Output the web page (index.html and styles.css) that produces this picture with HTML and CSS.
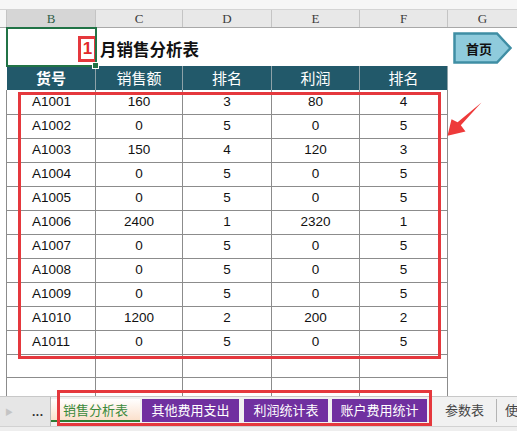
FILE: index.html
```html
<!DOCTYPE html>
<html lang="zh-CN">
<head>
<meta charset="utf-8">
<link rel="stylesheet" href="styles.css">
</head>
<body>
<div class="app">
  <div class="topstrip"></div>
  <div class="colhdr">
    <div class="ch corner"></div>
    <div class="ch sel">B</div>
    <div class="ch">C</div>
    <div class="ch">D</div>
    <div class="ch">E</div>
    <div class="ch">F</div>
    <div class="ch last">G</div>
  </div>
  <div class="sheet">
    <div class="row title-row">
      <div class="sp0"></div>
      <div class="title"><span class="month">1</span><span>月销售分析表</span></div>
      <div></div>
    </div>
    <div class="row hrow">
      <div class="sp0"></div>
      <div class="h bold">货号</div>
      <div class="h">销售额</div>
      <div class="h">排名</div>
      <div class="h">利润</div>
      <div class="h">排名</div>
      <div></div>
    </div>
    <div class="row drow"><div class="sp"></div><div class="c id">A1001</div><div class="c">160</div><div class="c">3</div><div class="c">80</div><div class="c">4</div><div></div></div>
    <div class="row drow"><div class="sp"></div><div class="c id">A1002</div><div class="c">0</div><div class="c">5</div><div class="c">0</div><div class="c">5</div><div></div></div>
    <div class="row drow"><div class="sp"></div><div class="c id">A1003</div><div class="c">150</div><div class="c">4</div><div class="c">120</div><div class="c">3</div><div></div></div>
    <div class="row drow"><div class="sp"></div><div class="c id">A1004</div><div class="c">0</div><div class="c">5</div><div class="c">0</div><div class="c">5</div><div></div></div>
    <div class="row drow"><div class="sp"></div><div class="c id">A1005</div><div class="c">0</div><div class="c">5</div><div class="c">0</div><div class="c">5</div><div></div></div>
    <div class="row drow"><div class="sp"></div><div class="c id">A1006</div><div class="c">2400</div><div class="c">1</div><div class="c">2320</div><div class="c">1</div><div></div></div>
    <div class="row drow"><div class="sp"></div><div class="c id">A1007</div><div class="c">0</div><div class="c">5</div><div class="c">0</div><div class="c">5</div><div></div></div>
    <div class="row drow"><div class="sp"></div><div class="c id">A1008</div><div class="c">0</div><div class="c">5</div><div class="c">0</div><div class="c">5</div><div></div></div>
    <div class="row drow"><div class="sp"></div><div class="c id">A1009</div><div class="c">0</div><div class="c">5</div><div class="c">0</div><div class="c">5</div><div></div></div>
    <div class="row drow"><div class="sp"></div><div class="c id">A1010</div><div class="c">1200</div><div class="c">2</div><div class="c">200</div><div class="c">2</div><div></div></div>
    <div class="row drow"><div class="sp"></div><div class="c id">A1011</div><div class="c">0</div><div class="c">5</div><div class="c">0</div><div class="c">5</div><div></div></div>
    <div class="row drow"><div class="sp"></div><div class="c"></div><div class="c"></div><div class="c"></div><div class="c"></div><div class="c"></div><div></div></div>
    <div class="row drow"><div class="sp"></div><div class="c"></div><div class="c"></div><div class="c"></div><div class="c"></div><div class="c"></div><div></div></div>
  </div>
  <div class="tabbar">
    <div class="nav"><span class="play">&#9654;</span><span class="more">...</span></div>
    <div class="tabs">
      <div class="tab active">销售分析表</div>
      <div class="tab purple t1">其他费用支出</div>
      <div class="tab purple t2">利润统计表</div>
      <div class="tab purple t3">账户费用统计</div>
      <div class="tab plain">参数表</div>
      <div class="tab plain2">使</div>
    </div>
  </div>
  <div class="status"></div>

  <div class="sel-box"><span class="handle"></span></div>
  <div class="red-box data-box"></div>
  <div class="red-box tabs-box"></div>
  <svg class="arrow" width="50" height="50" viewBox="440 95 50 50">
    <polygon points="481.5,102.5 460.8,125.2 465.5,131.5 447.5,135.8 451.5,119.2 457.6,122.2" fill="#ee3a3a"/>
  </svg>
  <div class="home">
    <svg class="home-shape" width="60" height="33" viewBox="0 0 60 33">
      <polygon points="1.5,1.5 44,1.5 57.5,16 44,30.5 1.5,30.5" fill="#8fcbdc" stroke="#3f8ea4" stroke-width="2.5" stroke-linejoin="miter"/>
    </svg>
    <span class="home-label">首页</span>
  </div>
</div>
</body>
</html>
```
FILE: styles.css
```css
html, body {
  margin: 0;
  padding: 0;
}
body {
  width: 517px;
  height: 431px;
  overflow: hidden;
  background: #ffffff;
  font-family: "Liberation Sans", "Noto Sans CJK SC", sans-serif;
}
.app {
  position: relative;
  width: 517px;
  height: 431px;
  overflow: hidden;
  display: flex;
  flex-direction: column;
}
.topstrip {
  height: 10px;
  flex: none;
  background: #f6f6f6;
  border-bottom: 1px solid #d4d4d4;
  box-sizing: border-box;
}
.colhdr {
  height: 18px;
  flex: none;
  display: grid;
  grid-template-columns: 7px 89px 87px 89px 88px 88px 1fr;
  background: #e8e8e8;
  border-bottom: 1px solid #a8a8a8;
  box-sizing: border-box;
}
.ch {
  box-sizing: border-box;
  border-right: 1px solid #c4c4c4;
  font-family: "Liberation Serif", serif;
  font-size: 13px;
  line-height: 17px;
  color: #3c3c3c;
  text-align: center;
}
.ch.corner {
  background: #f6f6f6;
  border-right: 1px solid #c4c4c4;
}
.ch.sel {
  background: #d6d6d6;
  color: #2f5d48;
}
.ch.last {
  border-right: none;
}
.sheet {
  height: 368px;
  flex: none;
  overflow: hidden;
}
.row {
  display: grid;
  grid-template-columns: 7px 89px 87px 89px 88px 88px 1fr;
  height: 24px;
}
.row > div {
  box-sizing: border-box;
}
.title-row {
  height: 38px;
}
.title {
  grid-column: span 5;
  display: flex;
  align-items: center;
  padding-left: 71px;
  padding-top: 3px;
  font-family: "Noto Sans CJK SC", sans-serif;
  font-weight: 700;
  font-size: 16.5px;
  color: #111;
}
.month {
  display: inline-block;
  box-sizing: border-box;
  width: 19px;
  height: 26px;
  border: 3px solid #e5383d;
  color: #e22a2a;
  font-family: "Liberation Sans", sans-serif;
  font-weight: 700;
  font-size: 17px;
  line-height: 20px;
  text-align: center;
  margin-right: 3px;
}
.hrow .h {
  background: #22596a;
  color: #ffffff;
  border-right: 1px solid #8ea2a8;
  font-family: "Noto Sans CJK SC", sans-serif;
  font-size: 15px;
  line-height: 24px;
  text-align: center;
}
.hrow .h.bold {
  font-weight: 700;
}
.drow .sp {
  border-right: 1px solid #8c8c8c;
}
.drow .c {
  border-right: 1px solid #8c8c8c;
  border-bottom: 1px solid #8c8c8c;
  text-align: center;
  font-size: 13.5px;
  line-height: 24px;
  color: #111;
}
.drow .c.id {
  text-align: left;
  padding-left: 25px;
}
.tabbar {
  height: 30px;
  flex: none;
  display: flex;
  background: #f1f1f1;
  border-top: 1px solid #c8c8c8;
  box-sizing: border-box;
}
.nav {
  width: 51px;
  flex: none;
  display: flex;
  align-items: center;
  background: #e6e6e6;
  border-right: 1px solid #b8b8b8;
  box-sizing: border-box;
}
.nav .play {
  color: #c4c4c4;
  font-size: 8px;
  margin-left: 5px;
}
.nav .more {
  margin-left: 19px;
  font-weight: 700;
  font-size: 12px;
  color: #333;
  letter-spacing: 0.5px;
}
.tabs {
  display: flex;
  align-items: flex-start;
  padding-top: 2px;
}
.tab {
  height: 23px;
  box-sizing: border-box;
  font-family: "Noto Sans CJK SC", sans-serif;
  font-size: 13px;
  line-height: 22px;
  text-align: center;
  flex: none;
}
.tab.active {
  width: 89px;
  background: linear-gradient(#ffffff, #fbe0cc);
  color: #3b8a3b;
  border-bottom: 2px solid #2e7d32;
}
.tab.purple {
  background: #7030a0;
  color: #ffffff;
}
.tab.t1 {
  width: 97px;
  margin-left: 2px;
}
.tab.t2 {
  width: 84px;
  margin-left: 5px;
}
.tab.t3 {
  width: 95px;
  margin-left: 4px;
}
.tab.plain {
  color: #444;
  padding: 0 12px 0 14px;
  margin-left: 4px;
  border-right: 1px solid #b4b4b4;
}
.tab.plain2 {
  color: #444;
  padding-left: 8px;
}
.status {
  flex: 1;
  background: #eeeeee;
  border-top: 1px solid #d2d2d2;
}
.sel-box {
  position: absolute;
  left: 6px;
  top: 27px;
  width: 91px;
  height: 40px;
  border: 2px solid #217346;
  box-sizing: border-box;
}
.sel-box .handle {
  position: absolute;
  right: -4px;
  bottom: -4px;
  width: 5px;
  height: 5px;
  background: #217346;
  border: 1px solid #fff;
}
.red-box {
  position: absolute;
  border: 3px solid #e5383d;
  box-sizing: border-box;
}
.data-box {
  left: 18px;
  top: 92px;
  width: 423px;
  height: 267px;
}
.tabs-box {
  left: 57px;
  top: 390px;
  width: 375px;
  height: 36px;
}
.arrow {
  position: absolute;
  left: 440px;
  top: 95px;
}
.home {
  position: absolute;
  left: 453px;
  top: 32px;
  width: 60px;
  height: 33px;
  display: flex;
  align-items: center;
}
.home-shape {
  position: absolute;
  left: 0;
  top: 0;
}
.home-label {
  position: relative;
  margin-left: 13px;
  font-family: "Noto Sans CJK SC", sans-serif;
  font-weight: 700;
  font-size: 13px;
  color: #111;
  line-height: 16px;
}
```
